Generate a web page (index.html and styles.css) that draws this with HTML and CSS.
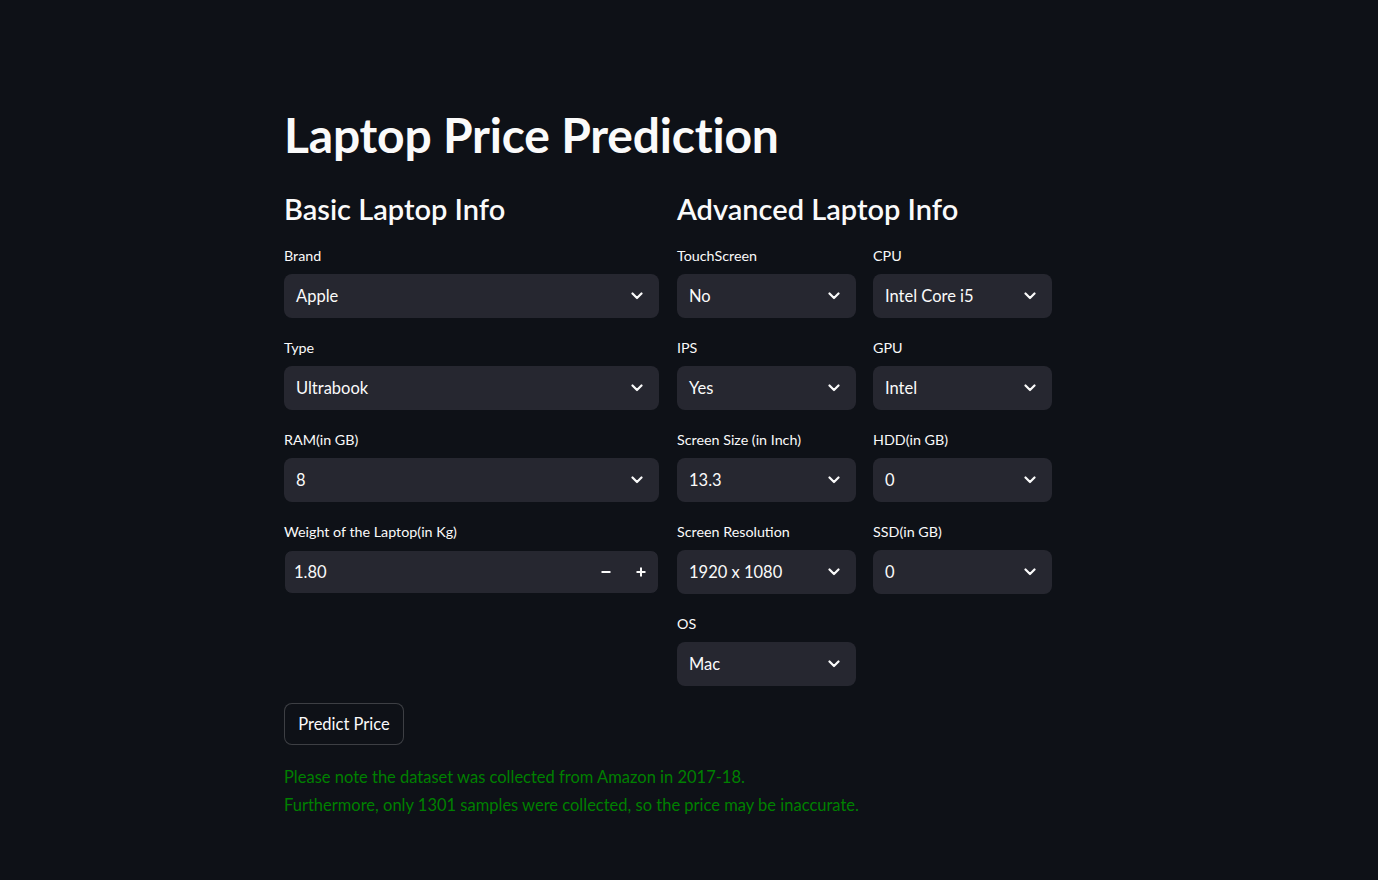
FILE: index.html
```html
<!DOCTYPE html>
<html lang="en">
<head>
<meta charset="utf-8">
<title>Laptop Price Prediction</title>
<link rel="stylesheet" href="styles.css">
</head>
<body>
<main class="page">
  <h1 class="title">Laptop Price Prediction</h1>
  <div class="cols">
    <section class="col">
      <h3 class="sub">Basic Laptop Info</h3>
      <div class="field">
        <div class="label">Brand</div>
        <div class="select"><span>Apple</span><svg class="chev" viewBox="0 0 12 8"><polyline points="1.5,1.5 6,6 10.5,1.5"/></svg></div>
      </div>
      <div class="field">
        <div class="label">Type</div>
        <div class="select"><span>Ultrabook</span><svg class="chev" viewBox="0 0 12 8"><polyline points="1.5,1.5 6,6 10.5,1.5"/></svg></div>
      </div>
      <div class="field">
        <div class="label">RAM(in GB)</div>
        <div class="select"><span>8</span><svg class="chev" viewBox="0 0 12 8"><polyline points="1.5,1.5 6,6 10.5,1.5"/></svg></div>
      </div>
      <div class="field last">
        <div class="label">Weight of the Laptop(in Kg)</div>
        <div class="number">
          <span class="num-val">1.80</span>
          <span class="step"><svg viewBox="0 0 10 10"><rect x="0.5" y="4" width="9" height="2"/></svg></span>
          <span class="step"><svg viewBox="0 0 10 10"><rect x="0.5" y="4" width="9" height="2"/><rect x="4" y="0.5" width="2" height="9"/></svg></span>
        </div>
      </div>
    </section>
    <section class="col">
      <h3 class="sub">Advanced Laptop Info</h3>
      <div class="inner">
        <div class="stack">
          <div class="field">
            <div class="label">TouchScreen</div>
            <div class="select"><span>No</span><svg class="chev" viewBox="0 0 12 8"><polyline points="1.5,1.5 6,6 10.5,1.5"/></svg></div>
          </div>
          <div class="field">
            <div class="label">IPS</div>
            <div class="select"><span>Yes</span><svg class="chev" viewBox="0 0 12 8"><polyline points="1.5,1.5 6,6 10.5,1.5"/></svg></div>
          </div>
          <div class="field">
            <div class="label">Screen Size (in Inch)</div>
            <div class="select"><span>13.3</span><svg class="chev" viewBox="0 0 12 8"><polyline points="1.5,1.5 6,6 10.5,1.5"/></svg></div>
          </div>
          <div class="field">
            <div class="label">Screen Resolution</div>
            <div class="select"><span>1920 x 1080</span><svg class="chev" viewBox="0 0 12 8"><polyline points="1.5,1.5 6,6 10.5,1.5"/></svg></div>
          </div>
          <div class="field last">
            <div class="label">OS</div>
            <div class="select"><span>Mac</span><svg class="chev" viewBox="0 0 12 8"><polyline points="1.5,1.5 6,6 10.5,1.5"/></svg></div>
          </div>
        </div>
        <div class="stack">
          <div class="field">
            <div class="label">CPU</div>
            <div class="select"><span>Intel Core i5</span><svg class="chev" viewBox="0 0 12 8"><polyline points="1.5,1.5 6,6 10.5,1.5"/></svg></div>
          </div>
          <div class="field">
            <div class="label">GPU</div>
            <div class="select"><span>Intel</span><svg class="chev" viewBox="0 0 12 8"><polyline points="1.5,1.5 6,6 10.5,1.5"/></svg></div>
          </div>
          <div class="field">
            <div class="label">HDD(in GB)</div>
            <div class="select"><span>0</span><svg class="chev" viewBox="0 0 12 8"><polyline points="1.5,1.5 6,6 10.5,1.5"/></svg></div>
          </div>
          <div class="field last">
            <div class="label">SSD(in GB)</div>
            <div class="select"><span>0</span><svg class="chev" viewBox="0 0 12 8"><polyline points="1.5,1.5 6,6 10.5,1.5"/></svg></div>
          </div>
        </div>
      </div>
    </section>
  </div>
  <button class="btn" type="button">Predict Price</button>
  <div class="note">
    <p>Please note the dataset was collected from Amazon in 2017-18.</p>
    <p>Furthermore, only 1301 samples were collected, so the price may be inaccurate.</p>
  </div>
</main>
</body>
</html>
```
FILE: styles.css
```css
* { box-sizing: border-box; }
html, body {
  margin: 0;
  background: #0e1117;
  color: #fafafa;
  font-family: "Lato", "Noto Sans", "DejaVu Sans", sans-serif;
}
.page {
  width: 768px;
  margin-left: 284px;
  padding-top: 106px;
}
.title {
  margin: 0;
  font-size: 48px;
  line-height: 58px;
  font-weight: 700;
  letter-spacing: -0.2px;
}
.cols {
  display: grid;
  grid-template-columns: 375px 375px;
  column-gap: 18px;
  margin-top: 27px;
}
.sub {
  margin: 0 0 19px 0;
  font-size: 29px;
  line-height: 36px;
  font-weight: 600;
}
.inner {
  display: grid;
  grid-template-columns: 179px 179px;
  column-gap: 17px;
}
.field { margin-bottom: 20px; }
.field.last { margin-bottom: 0; }
.label {
  font-size: 14.3px;
  line-height: 20px;
  margin-bottom: 8px;
  color: #fafafa;
}
.select {
  height: 44px;
  background: #262730;
  border-radius: 8px;
  display: flex;
  align-items: center;
  justify-content: space-between;
  padding: 0 16px 0 12px;
  font-size: 16.5px;
}
.select span { padding-bottom: 1px; }
.chev {
  width: 12px;
  height: 8px;
  fill: none;
  stroke: #fafafa;
  stroke-width: 2.2;
  stroke-linecap: round;
  stroke-linejoin: round;
}
.number {
  height: 44px;
  background: #262730;
  border: 1px solid #0e1117;
  border-radius: 8px;
  display: flex;
  align-items: center;
  padding-left: 9px;
  font-size: 16.5px;
}
.num-val { flex: 1; padding-bottom: 1px; }
.step {
  width: 35px;
  height: 100%;
  display: flex;
  align-items: center;
  justify-content: center;
}
.step svg { width: 10px; height: 10px; fill: #fafafa; }
.btn {
  display: block;
  margin-top: 17px;
  height: 42px;
  width: 120px;
  padding: 0 0 1px 0;
  background: #0e1117;
  color: #fafafa;
  border: 1px solid rgba(250, 250, 250, 0.2);
  border-radius: 8px;
  font-family: inherit;
  font-size: 16.5px;
}
.note {
  margin-top: 18px;
  color: #008000;
  font-size: 16.5px;
  line-height: 28px;
}
.note p { margin: 0; }
```
